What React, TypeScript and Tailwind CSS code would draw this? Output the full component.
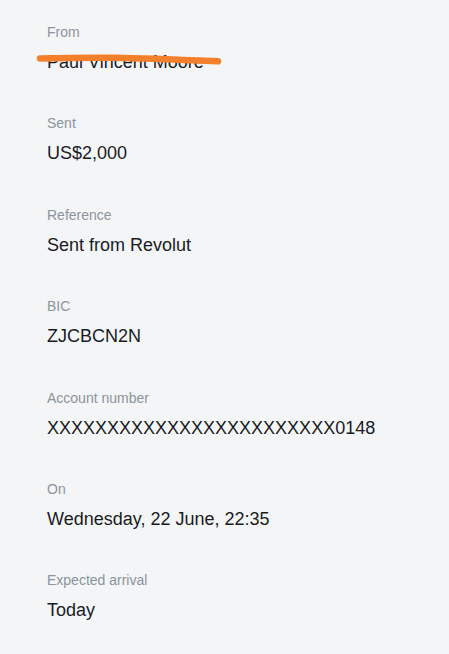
import React from "react";

const rows: { label: string; value: string }[] = [
  { label: "From", value: "Paul Vincent Moore" },
  { label: "Sent", value: "US$2,000" },
  { label: "Reference", value: "Sent from Revolut" },
  { label: "BIC", value: "ZJCBCN2N" },
  { label: "Account number", value: "XXXXXXXXXXXXXXXXXXXXXXXX0148" },
  { label: "On", value: "Wednesday, 22 June, 22:35" },
  { label: "Expected arrival", value: "Today" },
];

export default function App() {
  return (
    <div
      className="w-[449px] h-[654px] bg-[#f4f5f7] overflow-hidden"
      style={{ fontFamily: '"Liberation Sans", Arial, sans-serif' }}
    >
      <div className="flex flex-col gap-[37.4px] pt-[22px] pl-[47px]">
        {rows.map((r, i) => (
          <div key={r.label} className="flex flex-col gap-[6px]">
            <div className="text-[14px] leading-[20px] text-[#8b949c]">{r.label}</div>
            <div className="relative text-[18px] leading-[28px] text-[#191c1f]">
              {r.value}
              {i === 0 && (
                <svg
                  className="absolute left-[-11px] top-[2px]"
                  width="192"
                  height="20"
                  viewBox="0 0 192 20"
                >
                  <path
                    d="M4 8.5 C 30 7.8, 55 7.4, 80 7.8 S 150 10, 182 11.3"
                    fill="none"
                    stroke="#f5802c"
                    strokeWidth="6.5"
                    strokeLinecap="round"
                  />
                </svg>
              )}
            </div>
          </div>
        ))}
      </div>
    </div>
  );
}
